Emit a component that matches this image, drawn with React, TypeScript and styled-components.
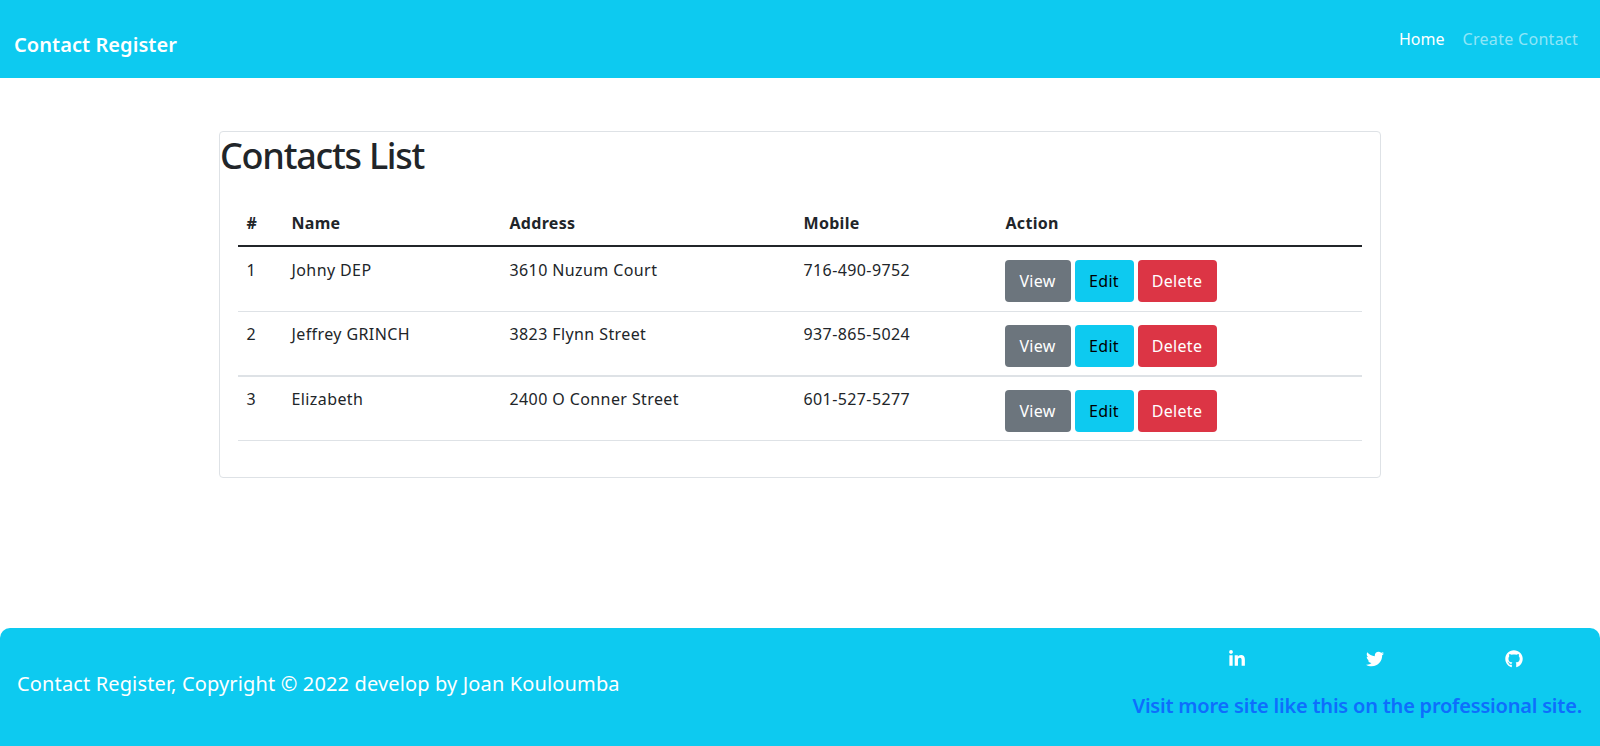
import React from "react";
import styled, { createGlobalStyle } from "styled-components";
import { FaLinkedinIn, FaTwitter, FaGithub } from "react-icons/fa";

const Global = createGlobalStyle`
  html, body { margin: 0; padding: 0; background: #fff; }
  body { font-family: "Noto Sans", "Open Sans", sans-serif; font-size: 16px; line-height: 24px; color: #212529; }
  * { box-sizing: border-box; }
`;

const Page = styled.div`
  display: flex;
  flex-direction: column;
  height: 746px;
  overflow: hidden;
`;

const Navbar = styled.nav`
  display: flex;
  flex: none;
  align-items: center;
  justify-content: space-between;
  height: 78px;
  padding: 12px 22px 0 14px;
  background: #0dcaf0;
`;

const Brand = styled.a`
  color: #fff;
  font-size: 20px;
  font-weight: 600;
  letter-spacing: 0.05px;
`;

const NavLinks = styled.div`
  display: flex;
  gap: 18px;
  margin-top: -12px;
`;

const NavLink = styled.a<{ $active?: boolean; $spacing: number }>`
  color: ${(p) => (p.$active ? "#fff" : "rgba(255,255,255,.55)")};
  font-size: 16px;
  letter-spacing: ${(p) => p.$spacing}px;
`;

const Main = styled.main`
  flex: 1;
  padding-top: 53px;
`;

const Card = styled.section`
  width: 1162px;
  height: 347px;
  margin-left: 219px;
  border: 1.5px solid #dee2e6;
  border-radius: 4px;
`;

const Title = styled.h1`
  margin: 0 0 26px;
  font-size: 36px;
  font-weight: 500;
  line-height: 47px;
  letter-spacing: -1.25px;
`;

const TableWrap = styled.div`
  padding: 0 17.5px;
`;

const Table = styled.table`
  width: 1124px;
  border-collapse: collapse;
  table-layout: fixed;
`;

const Th = styled.th<{ $w: number }>`
  width: ${(p) => p.$w}px;
  height: 41px;
  padding: 5.5px 8px 8px 9px;
  border-bottom: 2px solid #212529;
  font-size: 16px;
  font-weight: 700;
  letter-spacing: 0.3px;
  text-align: left;
  vertical-align: top;
`;

const Row = styled.tr<{ $h: number; $line: number }>`
  height: ${(p) => p.$h}px;
  border-bottom: ${(p) => p.$line}px solid #dee2e6;
`;

const Td = styled.td<{ $top: number }>`
  padding: ${(p) => p.$top}px 8px 8px 9px;
  font-size: 16px;
  letter-spacing: 0.4px;
  vertical-align: top;
`;

const ActionCell = styled.td`
  padding: 8px;
  vertical-align: top;
`;

const Actions = styled.div<{ $top: number }>`
  display: flex;
  gap: 4px;
  padding-top: ${(p) => p.$top}px;
`;

const colors = {
  secondary: { bg: "#6c757d", fg: "#fff" },
  info: { bg: "#0dcaf0", fg: "#000" },
  danger: { bg: "#dc3545", fg: "#fff" },
};

const Button = styled.button<{ $kind: keyof typeof colors; $w: number }>`
  width: ${(p) => p.$w}px;
  height: 42px;
  padding: 0;
  border: 0;
  border-radius: 4px;
  background: ${(p) => colors[p.$kind].bg};
  color: ${(p) => colors[p.$kind].fg};
  font: inherit;
  letter-spacing: 0.3px;
`;

const Footer = styled.footer`
  display: flex;
  flex: none;
  align-items: center;
  justify-content: space-between;
  height: 118px;
  padding: 0 18px 0 17px;
  border-radius: 10px 10px 0 0;
  background: #0dcaf0;
  color: #fff;
`;

const Copy = styled.p`
  margin: 0 0 6px;
  font-size: 20px;
  line-height: 30px;
  letter-spacing: 0.14px;
`;

const Side = styled.div`
  display: flex;
  flex-direction: column;
  align-items: flex-end;
  gap: 23px;
  margin-bottom: 3px;
`;

const Socials = styled.div`
  display: grid;
  grid-template-columns: repeat(3, 138.5px);
  justify-items: center;
  margin-right: -1px;
`;

const Social = styled.a`
  display: flex;
  color: #fff;
  font-size: 18px;
`;

const More = styled.a`
  color: #0d6efd;
  font-size: 20px;
  font-weight: 600;
  line-height: 30px;
  letter-spacing: -0.21px;
`;

const rows = [
  { n: 1, name: "Johny DEP", addr: "3610 Nuzum Court", mob: "716-490-9752", h: 65, top: 5, line: 1, textTop: 10.5 },
  { n: 2, name: "Jeffrey GRINCH", addr: "3823 Flynn Street", mob: "937-865-5024", h: 65, top: 5, line: 2, textTop: 10.5 },
  { n: 3, name: "Elizabeth", addr: "2400 O Conner Street", mob: "601-527-5277", h: 64, top: 5, line: 1, textTop: 9.5 },
];

const cols: [string, number][] = [["#", 45], ["Name", 218], ["Address", 294], ["Mobile", 202], ["Action", 365]];

export default function App() {
  return (
    <Page>
      <Global />
      <Navbar>
        <Brand>Contact Register</Brand>
        <NavLinks>
          <NavLink $active $spacing={0}>Home</NavLink>
          <NavLink $spacing={0.3}>Create Contact</NavLink>
        </NavLinks>
      </Navbar>
      <Main>
        <Card>
          <Title>Contacts List</Title>
          <TableWrap>
            <Table>
              <thead>
                <tr>
                  {cols.map(([label, w]) => (
                    <Th key={label} $w={w}>{label}</Th>
                  ))}
                </tr>
              </thead>
              <tbody>
                {rows.map((r) => (
                  <Row key={r.n} $h={r.h} $line={r.line}>
                    <Td $top={r.textTop}>{r.n}</Td>
                    <Td $top={r.textTop}>{r.name}</Td>
                    <Td $top={r.textTop}>{r.addr}</Td>
                    <Td $top={r.textTop}>{r.mob}</Td>
                    <ActionCell>
                      <Actions $top={r.top}>
                        <Button $kind="secondary" $w={66}>View</Button>
                        <Button $kind="info" $w={59}>Edit</Button>
                        <Button $kind="danger" $w={79}>Delete</Button>
                      </Actions>
                    </ActionCell>
                  </Row>
                ))}
              </tbody>
            </Table>
          </TableWrap>
        </Card>
      </Main>
      <Footer>
        <Copy>Contact Register, Copyright © 2022 develop by Joan Kouloumba</Copy>
        <Side>
          <Socials>
            <Social><FaLinkedinIn /></Social>
            <Social><FaTwitter /></Social>
            <Social><FaGithub /></Social>
          </Socials>
          <More>Visit more site like this on the professional site.</More>
        </Side>
      </Footer>
    </Page>
  );
}
